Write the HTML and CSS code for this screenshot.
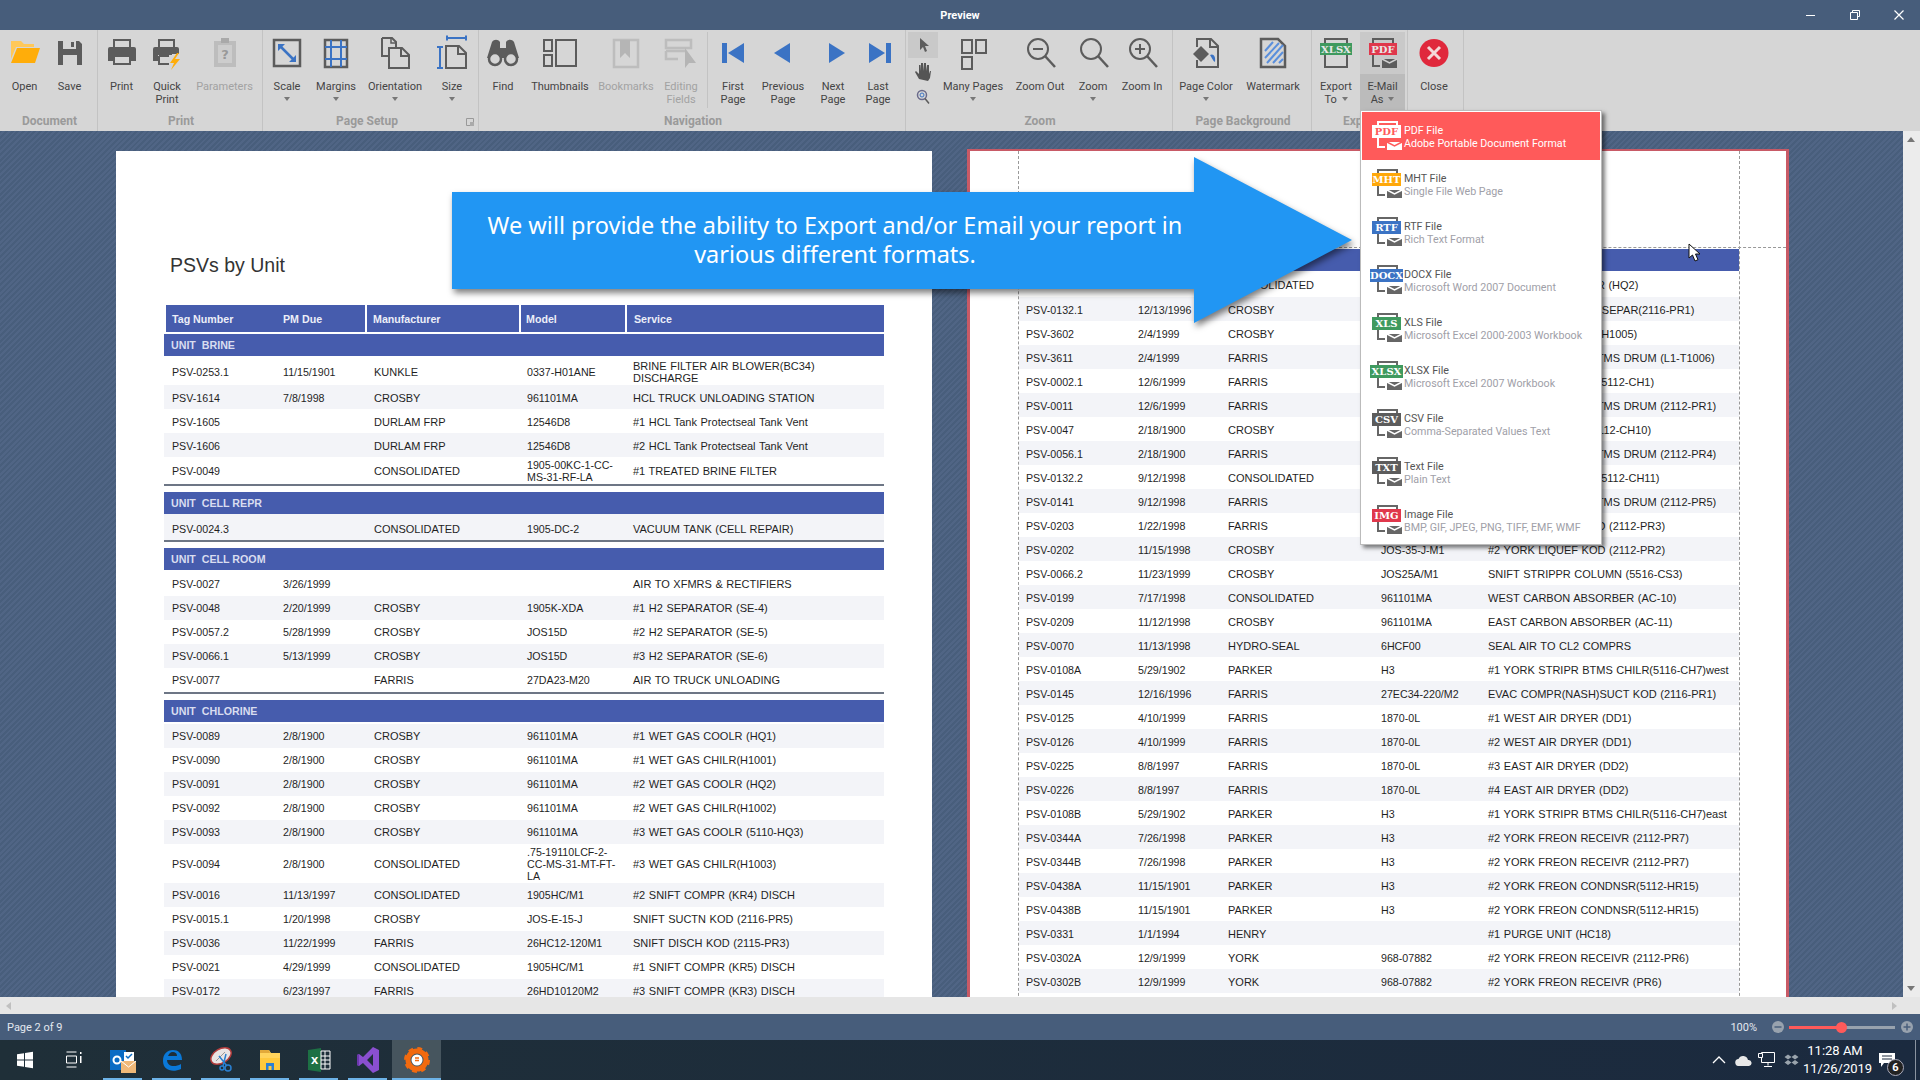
FILE: index.html
```html
<!DOCTYPE html>
<html>
<head>
  <meta charset="utf-8">
  <title>Preview</title>
  <link rel="stylesheet" href="styles.css">
</head>
<body>
<svg class="defs" width="0" height="0">
  <symbol id="maildoc" viewBox="0 0 32 30">
    <path d="M7 5V2h19v3M7 18v9h7" fill="none" stroke="#666" stroke-width="2"/>
    <path d="M16 22h15v8H16z" fill="#666"/>
    <path d="M16 22l7.500 4 7.500-4" fill="none" stroke="#fff" stroke-width="1.500"/>
  </symbol>
  <symbol id="maildocw" viewBox="0 0 32 30">
    <path d="M7 5V2h19v3M7 18v9h7" fill="none" stroke="#fff" stroke-width="2"/>
    <path d="M16 22h15v8H16z" fill="#fff"/>
    <path d="M16 22l7.500 4 7.500-4" fill="none" stroke="#ff5a5a" stroke-width="1.500"/>
  </symbol>
</svg>

<div id="app">
  <div class="titlebar">
    <span class="title">Preview</span>
    <div class="winbtns">
      <svg width="10" height="10" viewBox="0 0 10 10"><path d="M0 5.500h9" stroke="#fff"/></svg>
      <svg width="10" height="10" viewBox="0 0 10 10"><path d="M2.500 2.500V.5h7v6h-2M.5 2.500h7v7h-7z" fill="none" stroke="#fff"/></svg>
      <svg width="10" height="10" viewBox="0 0 10 10"><path d="M.5.500l9 9M9.500.500l-9 9" stroke="#fff" stroke-width="1.200"/></svg>
    </div>
  </div>

  <div class="ribbon">
    <div class="group g-doc">
      <div class="btns">
        <div class="btn w45"><svg class="ico" viewBox="0 0 36 36"><path d="M4 7h10l3 3h10v3H9L4 25z" fill="#ffc859"/><path d="M10 14h23l-5 15H4z" fill="#ffad0a"/></svg><span class="lbl">Open</span></div>
        <div class="btn w45"><svg class="ico" viewBox="0 0 36 36"><path d="M6 7h21l3 3v21H6z" fill="#5c5c5c"/><path d="M11 7h13v8H11zM11 21h14v10H11z" fill="#d6d6d6"/><path d="M19 8h3v5h-3z" fill="#5c5c5c"/></svg><span class="lbl">Save</span></div>
      </div>
      <div class="glabel">Document</div>
    </div>

    <div class="group g-print">
      <div class="btns">
        <div class="btn w43"><svg class="ico" viewBox="0 0 36 36"><path d="M10 14V6h16v8" fill="none" stroke="#5c5c5c" stroke-width="2"/><path d="M6 13h24a2 2 0 0 1 2 2v12h-5v-6H9v6H4V15a2 2 0 0 1 2-2z" fill="#5c5c5c"/><path d="M10 22h16v8H10z" fill="none" stroke="#5c5c5c" stroke-width="2"/></svg><span class="lbl">Print</span></div>
        <div class="btn w48"><svg class="ico" viewBox="0 0 36 36"><path d="M10 14V6h15v8" fill="none" stroke="#5c5c5c" stroke-width="2"/><path d="M6 13h22a2 2 0 0 1 2 2v5h-7v1H9v6H4V15a2 2 0 0 1 2-2z" fill="#5c5c5c"/><path d="M10 22h10M10 22v8h10" fill="none" stroke="#5c5c5c" stroke-width="2"/><path d="M28 19l-7 10h4l-3 7 9-11h-5l4-6z" fill="#ffad0a"/></svg><span class="lbl">Quick<br>Print</span></div>
        <div class="btn w67 off"><svg class="ico" viewBox="0 0 36 36"><path d="M7 7h22v26H7z" fill="#bdbdbd"/><path d="M14 4h8v5h-8z" fill="#a9a9a9"/><path d="M11 11h14v18H11z" fill="#cdcdcd"/><text x="18" y="25" class="qmark">?</text></svg><span class="lbl">Parameters</span></div>
      </div>
      <div class="glabel">Print</div>
    </div>

    <div class="group g-setup">
      <div class="btns">
        <div class="btn w44"><svg class="ico" viewBox="0 0 36 36"><path d="M5 6h26v26H5z" fill="none" stroke="#5c5c5c" stroke-width="2.500"/><path d="M10 11l16 16" stroke="#3b73c4" stroke-width="2.500"/><path d="M9 10h7l-7 7zM27 28h-7l7-7z" fill="#3b73c4"/></svg><span class="lbl">Scale</span></div>
        <div class="btn w54"><svg class="ico" viewBox="0 0 36 36"><path d="M7 6h22v27H7z" fill="none" stroke="#5c5c5c" stroke-width="2.500"/><path d="M13 6v27M23 6v27M7 13h22M7 25h22" stroke="#3b73c4" stroke-width="2"/></svg><span class="lbl">Margins</span></div>
        <div class="btn w64"><svg class="ico" viewBox="0 0 36 36"><path d="M5 4h10l4 4v8M12 22H5V4" fill="none" stroke="#5c5c5c" stroke-width="2"/><path d="M14 4v5h5" fill="none" stroke="#5c5c5c" stroke-width="1.500"/><path d="M12 14h13l7 7v13H12z" fill="#d6d6d6" stroke="#5c5c5c" stroke-width="2"/><path d="M24 14v8h8" fill="none" stroke="#5c5c5c" stroke-width="2"/></svg><span class="lbl">Orientation</span></div>
        <div class="btn w50"><svg class="ico" viewBox="0 0 36 36"><path d="M13 4h19M13 1.500v5M32 1.500v5M6 13v22M3 13h6M3 34h6" fill="none" stroke="#3b73c4" stroke-width="2"/><path d="M12 12h13l7 7v15H12z" fill="none" stroke="#5c5c5c" stroke-width="2"/><path d="M24 12v8h8" fill="none" stroke="#5c5c5c" stroke-width="2"/></svg><span class="lbl">Size</span></div>
      </div>
      <div class="glabel glabel-setup">Page Setup</div>
      <svg class="launcher" width="8" height="8" viewBox="0 0 8 8"><path d="M.5.500h7v7h-7z" fill="none" stroke="#999"/><path d="M4 4h4v4H4z" fill="#aaa"/></svg>
    </div>

    <div class="group g-nav">
      <div class="btns">
        <div class="btn w44"><svg class="ico" viewBox="0 0 36 36"><path d="M7 8c2-3 6-3 8 0v6h6V8c2-3 6-3 8 0l5 16H2z" fill="#5c5c5c"/><circle cx="10" cy="25" r="6" fill="#d6d6d6" stroke="#5c5c5c" stroke-width="2.500"/><circle cx="26" cy="25" r="6" fill="#d6d6d6" stroke="#5c5c5c" stroke-width="2.500"/></svg><span class="lbl">Find</span></div>
        <div class="btn w70"><svg class="ico" viewBox="0 0 36 36"><path d="M2 6h8v11H2zM2 21h8v11H2zM14 6h20v26H14z" fill="none" stroke="#5c5c5c" stroke-width="2"/></svg><span class="lbl">Thumbnails</span></div>
        <div class="btn w62 off"><svg class="ico" viewBox="0 0 36 36"><path d="M6 6h24v27H6z" fill="none" stroke="#bdbdbd" stroke-width="2.500"/><path d="M12 6h10v18l-5-5-5 5z" fill="#b5b5b5"/></svg><span class="lbl">Bookmarks</span></div>
        <div class="btn w48 off"><svg class="ico" viewBox="0 0 36 36"><path d="M3 6h25v8H3zM3 17h20M3 17v8h12" fill="none" stroke="#bdbdbd" stroke-width="2.500"/><path d="M22 14v20l4-5 7 0z" fill="#b5b5b5"/></svg><span class="lbl">Editing<br>Fields</span></div>
        <div class="vsep"></div>
        <div class="btn w48"><svg class="ico" viewBox="0 0 36 36"><path d="M7 9h5v20H7zM29 9v20L13 19z" fill="#3b73c4"/></svg><span class="lbl">First<br>Page</span></div>
        <div class="btn w52"><svg class="ico" viewBox="0 0 36 36"><path d="M25 9v20L9 19z" fill="#3b73c4"/></svg><span class="lbl">Previous<br>Page</span></div>
        <div class="btn w48"><svg class="ico" viewBox="0 0 36 36"><path d="M14 9v20l16-10z" fill="#3b73c4"/></svg><span class="lbl">Next<br>Page</span></div>
        <div class="btn w42"><svg class="ico" viewBox="0 0 36 36"><path d="M9 9v20l16-10zM26 9h5v20h-5z" fill="#3b73c4"/></svg><span class="lbl">Last<br>Page</span></div>
      </div>
      <div class="glabel">Navigation</div>
    </div>

    <div class="group g-zoom">
      <div class="btns">
        <div class="tools">
          <div class="tool tool-on"><svg width="14" height="16" viewBox="0 0 14 16"><path d="M4 1l0 12 3-3 2 5 2-1-2-5h4z" fill="#5c5c5c"/></svg></div>
          <div class="tool"><svg width="18" height="20" viewBox="0 0 18 20"><path d="M5 18L1 11l1-1 3 3V4h1.500l.5 6V2h2v8l1-8h2v8l1-6h2v9l1-3h1l-1 7-2 3z" fill="#555"/></svg></div>
          <div class="tool"><svg width="14" height="16" viewBox="0 0 14 16"><circle cx="6" cy="6" r="4.500" fill="none" stroke="#6a6a8a" stroke-width="1.500"/><circle cx="6" cy="6" r="2" fill="none" stroke="#3b73c4"/><path d="M9 9.500l4 5" stroke="#5c5c5c" stroke-width="1.500"/></svg></div>
        </div>
        <div class="btn w66"><svg class="ico" viewBox="0 0 36 36"><path d="M7 6h10v13H7zM21 6h10v13H21zM7 23h10v12H7z" fill="none" stroke="#5c5c5c" stroke-width="2"/></svg><span class="lbl">Many Pages</span></div>
        <div class="btn w68"><svg class="ico" viewBox="0 0 36 36"><circle cx="16" cy="15" r="10" fill="none" stroke="#5c5c5c" stroke-width="2"/><path d="M11 15h10" stroke="#5c5c5c" stroke-width="2"/><path d="M23 22l10 11" stroke="#5c5c5c" stroke-width="2.500"/></svg><span class="lbl">Zoom Out</span></div>
        <div class="btn w38"><svg class="ico" viewBox="0 0 36 36"><circle cx="16" cy="15" r="10" fill="none" stroke="#5c5c5c" stroke-width="2"/><path d="M23 22l10 11" stroke="#5c5c5c" stroke-width="2.500"/></svg><span class="lbl">Zoom</span></div>
        <div class="btn w60"><svg class="ico" viewBox="0 0 36 36"><circle cx="16" cy="15" r="10" fill="none" stroke="#5c5c5c" stroke-width="2"/><path d="M11 15h10M16 10v10" stroke="#5c5c5c" stroke-width="2"/><path d="M23 22l10 11" stroke="#5c5c5c" stroke-width="2.500"/></svg><span class="lbl">Zoom In</span></div>
      </div>
      <div class="glabel">Zoom</div>
    </div>

    <div class="group g-bg">
      <div class="btns">
        <div class="btn w62"><svg class="ico" viewBox="0 0 36 36"><path d="M9 13V5h14l7 7v21H9v-7" fill="none" stroke="#5c5c5c" stroke-width="2"/><path d="M22 5v8h8" fill="none" stroke="#5c5c5c" stroke-width="2"/><path d="M13 12l8 8-8 8-8-8z" fill="#5c5c5c"/><path d="M22 21c3-2 6 1 5 7-2-1-3-4-5-7z" fill="#3b73c4"/></svg><span class="lbl">Page Color</span></div>
        <div class="btn w72"><svg class="ico" viewBox="0 0 36 36"><path d="M6 5h17l7 7v21H6z" fill="none" stroke="#5c5c5c" stroke-width="2.500"/><path d="M10 17l8-9M10 24l14-15M12 29l16-18M18 29l10-11M24 29l4-4" stroke="#5a8fdc" stroke-width="2"/></svg><span class="lbl">Watermark</span></div>
      </div>
      <div class="glabel">Page Background</div>
    </div>

    <div class="group g-export">
      <div class="btns">
        <div class="btn w44"><svg class="ico" viewBox="0 0 36 36"><path d="M7 9V5h22v4M7 21v12h22V21" fill="none" stroke="#5c5c5c" stroke-width="2"/><path d="M2 9h32v12H2z" fill="#3f9a5f"/><text x="18" y="18.500" class="tag tag-lg">XLSX</text></svg><span class="lbl">Export<br>To <i class="caret-in"></i></span></div>
        <div class="btn-gap"></div>
        <div class="btn w45 btn-on"><svg class="ico" viewBox="0 0 36 36"><path d="M8 9V5h20v4M8 21v11h7" fill="none" stroke="#5c5c5c" stroke-width="2"/><path d="M4 9h28v12H4z" fill="#e0384c"/><text x="18" y="18.500" class="tag tag-lg">PDF</text><path d="M17 25h15v9H17z" fill="#5c5c5c"/><path d="M17 25l7.500 4 7.500-4" fill="none" stroke="#d0d0d0" stroke-width="1.500"/></svg><span class="lbl">E-Mail<br>As <i class="caret-in"></i></span></div>
      </div>
      <div class="glabel">Export</div>
    </div>

    <div class="group g-close">
      <div class="btns">
        <div class="btn w52"><svg class="ico" viewBox="0 0 36 36"><ellipse cx="18" cy="19" rx="14.500" ry="14" fill="#e0283c"/><path d="M12 13l12 12M24 13L12 25" stroke="#f4d8d8" stroke-width="3"/></svg><span class="lbl">Close</span></div>
      </div>
    </div>
  </div>

  <div class="mainrow">
    <div class="workspace">
      <div class="page page-left">
        <div class="report-title">PSVs by Unit</div>
        <div class="sheet">
          <div class="row head"><span>Tag Number</span><span>PM Due</span><span>Manufacturer</span><span>Model</span><span>Service</span></div>

          <div class="band">UNIT  BRINE</div>
          <div class="row h29 low"><span>PSV-0253.1</span><span>11/15/1901</span><span>KUNKLE</span><span>0337-H01ANE</span><span>BRINE FILTER AIR BLOWER(BC34)<br>DISCHARGE</span></div>
          <div class="row alt low"><span>PSV-1614</span><span>7/8/1998</span><span>CROSBY</span><span>961101MA</span><span>HCL TRUCK UNLOADING STATION</span></div>
          <div class="row low"><span>PSV-1605</span><span></span><span>DURLAM FRP</span><span>12546D8</span><span>#1 HCL Tank Protectseal Tank Vent</span></div>
          <div class="row alt low"><span>PSV-1606</span><span></span><span>DURLAM FRP</span><span>12546D8</span><span>#2 HCL Tank Protectseal Tank Vent</span></div>
          <div class="row h27"><span>PSV-0049</span><span></span><span>CONSOLIDATED</span><span>1905-00KC-1-CC-<br>MS-31-RF-LA</span><span>#1 TREATED BRINE FILTER</span></div>
          <div class="endline"></div>

          <div class="band">UNIT  CELL REPR</div>
          <div class="row h26 alt lower"><span>PSV-0024.3</span><span></span><span>CONSOLIDATED</span><span>1905-DC-2</span><span>VACUUM TANK (CELL REPAIR)</span></div>
          <div class="endline"></div>

          <div class="band">UNIT  CELL ROOM</div>
          <div class="row h26 low"><span>PSV-0027</span><span>3/26/1999</span><span></span><span></span><span>AIR TO XFMRS &amp; RECTIFIERS</span></div>
          <div class="row alt"><span>PSV-0048</span><span>2/20/1999</span><span>CROSBY</span><span>1905K-XDA</span><span>#1 H2 SEPARATOR (SE-4)</span></div>
          <div class="row"><span>PSV-0057.2</span><span>5/28/1999</span><span>CROSBY</span><span>JOS15D</span><span>#2 H2 SEPARATOR (SE-5)</span></div>
          <div class="row alt"><span>PSV-0066.1</span><span>5/13/1999</span><span>CROSBY</span><span>JOS15D</span><span>#3 H2 SEPARATOR (SE-6)</span></div>
          <div class="row"><span>PSV-0077</span><span></span><span>FARRIS</span><span>27DA23-M20</span><span>AIR TO TRUCK UNLOADING</span></div>
          <div class="endline"></div>

          <div class="band band-gap">UNIT  CHLORINE</div>
          <div class="row alt"><span>PSV-0089</span><span>2/8/1900</span><span>CROSBY</span><span>961101MA</span><span>#1 WET GAS COOLR (HQ1)</span></div>
          <div class="row"><span>PSV-0090</span><span>2/8/1900</span><span>CROSBY</span><span>961101MA</span><span>#1 WET GAS CHILR(H1001)</span></div>
          <div class="row alt"><span>PSV-0091</span><span>2/8/1900</span><span>CROSBY</span><span>961101MA</span><span>#2 WET GAS COOLR (HQ2)</span></div>
          <div class="row"><span>PSV-0092</span><span>2/8/1900</span><span>CROSBY</span><span>961101MA</span><span>#2 WET GAS CHILR(H1002)</span></div>
          <div class="row alt"><span>PSV-0093</span><span>2/8/1900</span><span>CROSBY</span><span>961101MA</span><span>#3 WET GAS COOLR (5110-HQ3)</span></div>
          <div class="row h39"><span>PSV-0094</span><span>2/8/1900</span><span>CONSOLIDATED</span><span>.75-19110LCF-2-<br>CC-MS-31-MT-FT-<br>LA</span><span>#3 WET GAS CHILR(H1003)</span></div>
          <div class="row alt"><span>PSV-0016</span><span>11/13/1997</span><span>CONSOLIDATED</span><span>1905HC/M1</span><span>#2 SNIFT COMPR (KR4) DISCH</span></div>
          <div class="row"><span>PSV-0015.1</span><span>1/20/1998</span><span>CROSBY</span><span>JOS-E-15-J</span><span>SNIFT SUCTN KOD (2116-PR5)</span></div>
          <div class="row alt"><span>PSV-0036</span><span>11/22/1999</span><span>FARRIS</span><span>26HC12-120M1</span><span>SNIFT DISCH KOD (2115-PR3)</span></div>
          <div class="row"><span>PSV-0021</span><span>4/29/1999</span><span>CONSOLIDATED</span><span>1905HC/M1</span><span>#1 SNIFT COMPR (KR5) DISCH</span></div>
          <div class="row alt"><span>PSV-0172</span><span>6/23/1997</span><span>FARRIS</span><span>26HD10120M2</span><span>#3 SNIFT COMPR (KR3) DISCH</span></div>
        </div>
      </div>

      <div class="page page-right">
        <div class="margins">
          <div class="band"></div>
          <div class="row h26"><span>PSV-0217</span><span>1/27/1999</span><span>CONSOLIDATED</span><span></span><span>#2 WET GAS COOLER (HQ2)</span></div>
          <div class="row alt"><span>PSV-0132.1</span><span>12/13/1996</span><span>CROSBY</span><span></span><span>#2 EVAC COMPR OIL SEPAR(2116-PR1)</span></div>
          <div class="row"><span>PSV-3602</span><span>2/4/1999</span><span>CROSBY</span><span></span><span>#3 WET GAS CHILLR(H1005)</span></div>
          <div class="row alt"><span>PSV-3611</span><span>2/4/1999</span><span>FARRIS</span><span></span><span>#1 YORK CONDSR BTMS DRUM (L1-T1006)</span></div>
          <div class="row"><span>PSV-0002.1</span><span>12/6/1999</span><span>FARRIS</span><span></span><span>#1 YORK CONDNSR (5112-CH1)</span></div>
          <div class="row alt"><span>PSV-0011</span><span>12/6/1999</span><span>FARRIS</span><span></span><span>#1 YORK CONDSR BTMS DRUM (2112-PR1)</span></div>
          <div class="row"><span>PSV-0047</span><span>2/18/1900</span><span>CROSBY</span><span></span><span>#2 YORK CHILLER (5112-CH10)</span></div>
          <div class="row alt"><span>PSV-0056.1</span><span>2/18/1900</span><span>FARRIS</span><span></span><span>#4 YORK CONDSR BTMS DRUM (2112-PR4)</span></div>
          <div class="row"><span>PSV-0132.2</span><span>9/12/1998</span><span>CONSOLIDATED</span><span></span><span>#3 YORK CONDNSR (5112-CH11)</span></div>
          <div class="row alt"><span>PSV-0141</span><span>9/12/1998</span><span>FARRIS</span><span></span><span>#5 YORK CONDSR BTMS DRUM (2112-PR5)</span></div>
          <div class="row"><span>PSV-0203</span><span>1/22/1998</span><span>FARRIS</span><span></span><span>#1 YORK LIQUEF KOD (2112-PR3)</span></div>
          <div class="row alt"><span>PSV-0202</span><span>11/15/1998</span><span>CROSBY</span><span>JOS-35-J-M1</span><span>#2 YORK LIQUEF KOD (2112-PR2)</span></div>
          <div class="row"><span>PSV-0066.2</span><span>11/23/1999</span><span>CROSBY</span><span>JOS25A/M1</span><span>SNIFT STRIPPR COLUMN (5516-CS3)</span></div>
          <div class="row alt"><span>PSV-0199</span><span>7/17/1998</span><span>CONSOLIDATED</span><span>961101MA</span><span>WEST CARBON ABSORBER (AC-10)</span></div>
          <div class="row"><span>PSV-0209</span><span>11/12/1998</span><span>CROSBY</span><span>961101MA</span><span>EAST CARBON ABSORBER (AC-11)</span></div>
          <div class="row alt"><span>PSV-0070</span><span>11/13/1998</span><span>HYDRO-SEAL</span><span>6HCF00</span><span>SEAL AIR TO CL2 COMPRS</span></div>
          <div class="row"><span>PSV-0108A</span><span>5/29/1902</span><span>PARKER</span><span>H3</span><span>#1 YORK STRIPR BTMS CHILR(5116-CH7)west</span></div>
          <div class="row alt"><span>PSV-0145</span><span>12/16/1996</span><span>FARRIS</span><span>27EC34-220/M2</span><span>EVAC COMPR(NASH)SUCT KOD (2116-PR1)</span></div>
          <div class="row"><span>PSV-0125</span><span>4/10/1999</span><span>FARRIS</span><span>1870-0L</span><span>#1 WEST AIR DRYER (DD1)</span></div>
          <div class="row alt"><span>PSV-0126</span><span>4/10/1999</span><span>FARRIS</span><span>1870-0L</span><span>#2 WEST AIR DRYER (DD1)</span></div>
          <div class="row"><span>PSV-0225</span><span>8/8/1997</span><span>FARRIS</span><span>1870-0L</span><span>#3 EAST AIR DRYER (DD2)</span></div>
          <div class="row alt"><span>PSV-0226</span><span>8/8/1997</span><span>FARRIS</span><span>1870-0L</span><span>#4 EAST AIR DRYER (DD2)</span></div>
          <div class="row"><span>PSV-0108B</span><span>5/29/1902</span><span>PARKER</span><span>H3</span><span>#1 YORK STRIPR BTMS CHILR(5116-CH7)east</span></div>
          <div class="row alt"><span>PSV-0344A</span><span>7/26/1998</span><span>PARKER</span><span>H3</span><span>#2 YORK FREON RECEIVR (2112-PR7)</span></div>
          <div class="row"><span>PSV-0344B</span><span>7/26/1998</span><span>PARKER</span><span>H3</span><span>#2 YORK FREON RECEIVR (2112-PR7)</span></div>
          <div class="row alt"><span>PSV-0438A</span><span>11/15/1901</span><span>PARKER</span><span>H3</span><span>#2 YORK FREON CONDNSR(5112-HR15)</span></div>
          <div class="row"><span>PSV-0438B</span><span>11/15/1901</span><span>PARKER</span><span>H3</span><span>#2 YORK FREON CONDNSR(5112-HR15)</span></div>
          <div class="row alt"><span>PSV-0331</span><span>1/1/1994</span><span>HENRY</span><span></span><span>#1 PURGE UNIT (HC18)</span></div>
          <div class="row"><span>PSV-0302A</span><span>12/9/1999</span><span>YORK</span><span>968-07882</span><span>#2 YORK FREON RECEIVR (2112-PR6)</span></div>
          <div class="row alt"><span>PSV-0302B</span><span>12/9/1999</span><span>YORK</span><span>968-07882</span><span>#2 YORK FREON RECEIVR (PR6)</span></div>
        </div>
      </div>
    </div>
    <div class="vscroll"><i class="arr arr-up"></i><i class="arr arr-down"></i></div>
  </div>
  <div class="hscroll"><i class="arr arr-left"></i><i class="arr arr-right"></i></div>

  <div class="statusbar">
    <span>Page 2 of 9</span>
    <div class="zoombar">
      <span class="pct">100%</span>
      <svg width="12" height="12" viewBox="0 0 12 12"><circle cx="6" cy="6" r="6" fill="#98a2ae"/><path d="M2.500 6h7" stroke="#4a5f7d" stroke-width="1.500"/></svg>
      <div class="track"><div class="fill"></div><div class="thumb"></div></div>
      <svg width="12" height="12" viewBox="0 0 12 12"><circle cx="6" cy="6" r="6" fill="#98a2ae"/><path d="M2.500 6h7M6 2.500v7" stroke="#4a5f7d" stroke-width="1.500"/></svg>
    </div>
  </div>

  <div class="taskbar">
    <div class="tb-slot"><svg width="18" height="18" viewBox="0 0 18 18"><path d="M1 3.200l7-1v6.300H1zM9 2l8-1.200v7.700H9zM1 9.500h7v6.300l-7-1zM9 9.500h8v7.700L9 16z" fill="#fff"/></svg></div>
    <div class="tb-slot"><svg width="18" height="18" viewBox="0 0 18 18"><path d="M1.500 1h10M1.500 16h10M1.500 5h10v7h-10z" fill="none" stroke="#fff"/><path d="M15 1h1.500v2H15zM15 5h1.500v7H15z" fill="#fff"/></svg></div>
    <div class="tb-slot tb-run"><svg width="28" height="28" viewBox="0 0 28 28"><path d="M1 4h16v20H1z" fill="#0a6cc4"/><circle cx="8" cy="14" r="3.500" fill="none" stroke="#fff" stroke-width="2"/><path d="M15 6h10v9H15z" fill="#fff"/><path d="M17 10l2 2 4-4" fill="none" stroke="#0a6cc4" stroke-width="1.500"/><path d="M12 15h15v12H12z" fill="#f0b878"/><path d="M12 15l7.500 6 7.500-6" fill="none" stroke="#fff"/></svg></div>
    <div class="tb-slot tb-run"><svg width="24" height="26" viewBox="0 0 24 26"><path d="M3 14c0-7 4-11 10-11 5 0 9 3 9 10H7c0 6 7 8 14 4v5c-9 4-18 1-18-8zM8 9h9c0-3-2-4-4-4-3 0-4 2-5 4z" fill="#0a78d7"/></svg></div>
    <div class="tb-slot tb-run"><svg width="26" height="26" viewBox="0 0 26 26"><ellipse cx="13" cy="9" rx="11" ry="7" transform="rotate(-30 13 9)" fill="#e9e4e4" stroke="#b33c3c" stroke-width="1.500"/><path d="M8 14L17 5" stroke="#999"/><path d="M11 9l8 10M18 7l-3 12" stroke="#2a7fd0" stroke-width="1.500"/><circle cx="20" cy="21" r="3" fill="none" stroke="#2a7fd0" stroke-width="1.500"/><circle cx="14" cy="21" r="2" fill="none" stroke="#2a7fd0" stroke-width="1.500"/></svg></div>
    <div class="tb-slot tb-run"><svg width="24" height="24" viewBox="0 0 24 24"><path d="M2 2h9l2 3h9v17H2z" fill="#ffd35c"/><path d="M2 2h9l1 3H2z" fill="#e2a93a"/><path d="M2 10h20v12H2z" fill="#ffc83d"/><path d="M8 22v-7h8v7h-2.500v-4h-3v4z" fill="#2d7fd3"/></svg></div>
    <div class="tb-slot tb-run"><svg width="24" height="26" viewBox="0 0 24 26"><path d="M1 3l13-2v24L1 23z" fill="#1d7044"/><path d="M14 4h9v18h-9z" fill="none" stroke="#fff"/><path d="M14 9h9M14 13h9M14 17h9M18 4v18" stroke="#fff"/><text x="7.500" y="17" class="xl-x">x</text></svg></div>
    <div class="tb-slot tb-run"><svg width="24" height="28" viewBox="0 0 24 28"><path d="M17 1l6 3v20l-6 3L7 17l-4 3-2-1V9l2-1 4 3zM17 8l-6 6 6 6z" fill="#8a4fd0"/><path d="M1 9l2-1v12l-2-1z" fill="#6c37ad"/></svg></div>
    <div class="tb-slot tb-active"><svg width="28" height="28" viewBox="0 0 28 28"><circle cx="14" cy="14" r="9" fill="none" stroke="#f26a0f" stroke-width="5"/><circle cx="14" cy="14" r="11" fill="none" stroke="#f26a0f" stroke-width="4" stroke-dasharray="4.500 4.140"/><circle cx="14" cy="14" r="5.500" fill="#fff"/><path d="M12 12h4M12 14.500h4" stroke="#f26a0f" stroke-width="1.300"/></svg></div>
    <div class="tray">
      <span class="tray-ico"><svg width="14" height="8" viewBox="0 0 14 8"><path d="M1 7l6-6 6 6" fill="none" stroke="#fff" stroke-width="1.300"/></svg></span>
      <span class="tray-ico"><svg width="17" height="11" viewBox="0 0 17 11"><path d="M4 11a3.500 3.500 0 0 1-.5-7 5 5 0 0 1 9.500 1 3 3 0 0 1 1 6z" fill="#e8e8e8"/></svg></span>
      <span class="tray-ico"><svg width="18" height="16" viewBox="0 0 18 16"><path d="M3.500 .5h13v10h-13zM10 10.500v3M6 14.500h8" fill="none" stroke="#fff"/><path d="M.5 1.500h4v4h-4z" fill="#1c2a3e" stroke="#fff"/></svg></span>
      <span class="tray-ico"><svg width="15" height="13" viewBox="0 0 15 13"><path d="M4 .5L7.500 3 4 5.500.5 3zM11 .5L14.500 3 11 5.500 7.500 3zM4 6l3.500 2.500L4 11 .5 8.500zM11 6l3.500 2.500L11 11 7.500 8.500z" fill="#9aa4ad"/></svg></span>
      <div class="clock">11:28 AM<br>11/26/2019</div>
      <div class="notif">
        <svg width="16" height="14" viewBox="0 0 16 14"><path d="M0 0h16v10H5l-3 4v-4H0z" fill="#fff"/><path d="M3 3h10M3 6h10" stroke="#1c2a3e"/></svg>
        <span class="badge">6</span>
      </div>
    </div>
  </div>

  <!-- overlays -->
  <div class="callout">
    <svg class="arrow" width="910" height="176" viewBox="0 0 910 176"><path d="M0 35h742V0l158 83-158 83v-34H0z" fill="#2196f3"/></svg>
    <p>We will provide the ability to Export and/or Email your report in<br>various different formats.</p>
  </div>

  <div class="menu">
    <div class="item item-on"><svg class="mi" viewBox="0 0 32 30"><use href="#maildocw"/><rect x="1" y="5" width="29" height="13" fill="#fff"/><text x="15.500" y="15" class="tag tag-red">PDF</text></svg><div><div class="mt">PDF File</div><div class="md">Adobe Portable Document Format</div></div></div>
    <div class="item"><svg class="mi" viewBox="0 0 32 30"><use href="#maildoc"/><rect x="1" y="5" width="29" height="13" fill="#ffa80a"/><text x="15.500" y="15" class="tag">MHT</text></svg><div><div class="mt">MHT File</div><div class="md">Single File Web Page</div></div></div>
    <div class="item"><svg class="mi" viewBox="0 0 32 30"><use href="#maildoc"/><rect x="1" y="5" width="29" height="13" fill="#3b73c4"/><text x="15.500" y="15" class="tag">RTF</text></svg><div><div class="mt">RTF File</div><div class="md">Rich Text Format</div></div></div>
    <div class="item"><svg class="mi" viewBox="0 0 32 30"><use href="#maildoc"/><rect x="-1" y="5" width="33" height="13" fill="#3b73c4"/><text x="15.500" y="15" class="tag">DOCX</text></svg><div><div class="mt">DOCX File</div><div class="md">Microsoft Word 2007 Document</div></div></div>
    <div class="item"><svg class="mi" viewBox="0 0 32 30"><use href="#maildoc"/><rect x="1" y="5" width="29" height="13" fill="#3f9a5f"/><text x="15.500" y="15" class="tag">XLS</text></svg><div><div class="mt">XLS File</div><div class="md">Microsoft Excel 2000-2003 Workbook</div></div></div>
    <div class="item"><svg class="mi" viewBox="0 0 32 30"><use href="#maildoc"/><rect x="-1" y="5" width="33" height="13" fill="#3f9a5f"/><text x="15.500" y="15" class="tag">XLSX</text></svg><div><div class="mt">XLSX File</div><div class="md">Microsoft Excel 2007 Workbook</div></div></div>
    <div class="item"><svg class="mi" viewBox="0 0 32 30"><use href="#maildoc"/><rect x="1" y="5" width="29" height="13" fill="#5c5c5c"/><text x="15.500" y="15" class="tag">CSV</text></svg><div><div class="mt">CSV File</div><div class="md">Comma-Separated Values Text</div></div></div>
    <div class="item"><svg class="mi" viewBox="0 0 32 30"><use href="#maildoc"/><rect x="1" y="5" width="29" height="13" fill="#5c5c5c"/><text x="15.500" y="15" class="tag">TXT</text></svg><div><div class="mt">Text File</div><div class="md">Plain Text</div></div></div>
    <div class="item"><svg class="mi" viewBox="0 0 32 30"><use href="#maildoc"/><rect x="1" y="5" width="29" height="13" fill="#e0384c"/><text x="15.500" y="15" class="tag">IMG</text></svg><div><div class="mt">Image File</div><div class="md">BMP, GIF, JPEG, PNG, TIFF, EMF, WMF</div></div></div>
  </div>

  <svg class="cursor" width="14" height="20" viewBox="0 0 14 20"><path d="M1 1v14l3.500-3 2.500 6 3-1.300-2.500-5.700H12z" fill="#fff" stroke="#111"/></svg>
</div>
</body>
</html>
```

FILE: styles.css
```css
* {
  box-sizing: border-box;
}

html, body {
  margin: 0;
  padding: 0;
  overflow: hidden;
}

.defs {
  position: absolute;
}

#app {
  position: relative;
  width: 1920px;
  height: 1080px;
  display: flex;
  flex-direction: column;
  overflow: hidden;
  font-family: "Roboto", "Liberation Sans", sans-serif;
  font-size: 11px;
  color: #444;
  background: #d6d6d6;
}

/* title bar */
.titlebar {
  position: relative;
  height: 30px;
  flex: none;
  display: flex;
  align-items: center;
  justify-content: center;
  background: #475d7b;
  color: #fff;
}

.title {
  font-weight: bold;
  font-size: 11px;
}

.winbtns {
  position: absolute;
  right: 16px;
  top: 10px;
  display: flex;
  gap: 34px;
}

/* ribbon */
.ribbon {
  height: 101px;
  flex: none;
  display: flex;
  background: #d6d6d6;
}

.group {
  position: relative;
  display: flex;
  flex-direction: column;
  padding-left: 2px;
  border-right: 1px solid #c3c3c3;
}

.g-doc { width: 98px; }
.g-print { width: 165px; }
.g-setup { width: 216px; }
.g-nav { width: 427px; }
.g-zoom { width: 267px; }
.g-bg { width: 139px; }
.g-export { width: 96px; }
.g-close { width: 56px; padding-left: 0; }

.btns {
  display: flex;
  height: 80px;
  padding-top: 2px;
}

.btn {
  display: flex;
  flex-direction: column;
  align-items: center;
  text-align: center;
  flex: none;
}

.w38 { width: 38px; }
.w42 { width: 42px; }
.w43 { width: 43px; }
.w44 { width: 44px; }
.w45 { width: 45px; }
.w48 { width: 48px; }
.w50 { width: 50px; }
.w52 { width: 52px; }
.w54 { width: 54px; }
.w60 { width: 60px; }
.w62 { width: 62px; }
.w64 { width: 64px; }
.w66 { width: 66px; }
.w67 { width: 67px; }
.w68 { width: 68px; }
.w70 { width: 70px; }
.w72 { width: 72px; }

.btn-gap {
  width: 2px;
}

.ico {
  width: 36px;
  height: 36px;
  flex: none;
  margin-top: 2px;
  margin-bottom: 10px;
}

.lbl {
  line-height: 13px;
  white-space: nowrap;
}

.off {
  color: #a2a2a2;
}

.btn-on {
  height: 78px;
  background: linear-gradient(#c9c9c9 0, #c9c9c9 42px, #bbb 42px);
}

.caret-in {
  display: inline-block;
  width: 0;
  height: 0;
  margin-left: 2px;
  vertical-align: 2px;
  border-left: 3.500px solid transparent;
  border-right: 3.500px solid transparent;
  border-top: 4px solid #777;
}

/* dropdown arrows under the one-line captions */
.g-setup .btn .lbl::after,
.g-zoom .w66 .lbl::after,
.g-zoom .w38 .lbl::after,
.g-bg .w62 .lbl::after {
  content: "";
  display: block;
  width: 0;
  height: 0;
  margin: 4px auto 0;
  border-left: 3.500px solid transparent;
  border-right: 3.500px solid transparent;
  border-top: 4px solid #777;
}

.vsep {
  width: 1px;
  height: 76px;
  margin: 0 1px 0 2px;
  background: #c3c3c3;
  flex: none;
}

.tools {
  width: 30px;
  margin-right: 2px;
  flex: none;
}

.tool {
  height: 26px;
  display: flex;
  align-items: center;
  justify-content: center;
}

.tool-on {
  background: #c9c9c9;
}

.glabel {
  height: 21px;
  padding-top: 2px;
  line-height: 19px;
  text-align: center;
  font-weight: bold;
  font-size: 12px;
  color: #9a9a9a;
}

.glabel-setup {
  padding-right: 9px;
}

.launcher {
  position: absolute;
  right: 4px;
  bottom: 5px;
}

.qmark {
  font-family: "DejaVu Sans", sans-serif;
  font-size: 13px;
  font-weight: bold;
  fill: #999;
  text-anchor: middle;
}

.tag {
  font-family: "DejaVu Serif", serif;
  font-weight: bold;
  font-size: 10px;
  fill: #fff;
  text-anchor: middle;
}

.tag-lg {
  fill: #e8e8e8;
}

.tag-red {
  fill: #ff5a5a;
}

/* page area */
.mainrow {
  height: 866px;
  flex: none;
  display: flex;
}

.workspace {
  flex: 1;
  display: flex;
  align-items: flex-start;
  gap: 35px;
  padding: 18px 0 0 116px;
  overflow: hidden;
  background: repeating-linear-gradient(135deg, #485e7c 0, #485e7c 2px, #506585 2px, #506585 4px);
}

.vscroll {
  position: relative;
  width: 17px;
  background: #ececec;
}

.hscroll {
  position: relative;
  height: 17px;
  flex: none;
  background: #e6e6e6;
}

.arr {
  position: absolute;
  width: 0;
  height: 0;
}

.arr-up {
  top: 6px;
  left: 4px;
  border-left: 4px solid transparent;
  border-right: 4px solid transparent;
  border-bottom: 5px solid #777;
}

.arr-down {
  bottom: 6px;
  left: 4px;
  border-left: 4px solid transparent;
  border-right: 4px solid transparent;
  border-top: 5px solid #777;
}

.arr-left {
  left: 6px;
  top: 5px;
  border-top: 4px solid transparent;
  border-bottom: 4px solid transparent;
  border-right: 5px solid #c0c0c0;
}

.arr-right {
  right: 23px;
  top: 5px;
  border-top: 4px solid transparent;
  border-bottom: 4px solid transparent;
  border-left: 5px solid #c0c0c0;
}

.page {
  background: #fff;
  flex: none;
  color: #1f1f1f;
  font-family: "Liberation Sans", Arial, sans-serif;
  font-size: 10.670px;
  line-height: 12px;
}

.page-left {
  width: 816px;
  height: 900px;
  margin-top: 2px;
  padding-left: 48px;
}

.report-title {
  height: 154px;
  padding: 104px 0 0 6px;
  font-size: 19.500px;
  line-height: 20px;
  color: #333;
}

.sheet {
  width: 720px;
}

.row {
  display: grid;
  height: 24px;
  align-items: center;
  grid-template-columns: 111px 90px 154px 106px 259px;
}

.row > span:nth-child(3) {
  font-size: 11px;
}

.row > span:nth-child(5) {
  font-size: 11px;
  word-spacing: .5px;
}

.page-left .row > span:nth-child(1),
.page-left .row > span:nth-child(2),
.page-left .row > span:nth-child(4),
.page-left .row > span:nth-child(5) {
  padding-left: 8px;
}

.page-left .row > span:nth-child(3) {
  padding-left: 9px;
}

.alt {
  background: #f3f4f8;
}

.h26 { height: 26px; }
.h27 { height: 27px; }
.h29 { height: 29px; }
.h39 { height: 39px; }

.low { padding-top: 2px; }
.lower { padding-top: 4px; }

.head {
  height: 29px;
  padding-bottom: 2px;
  align-items: stretch;
  font-weight: bold;
  color: #eceef8;
}

.head span {
  display: flex;
  align-items: center;
  background: #465cad;
}

.page-left .head span:nth-child(1) {
  margin-left: 2px;
  padding-left: 6px;
}

.head span:nth-child(3),
.head span:nth-child(4),
.head span:nth-child(5) {
  border-left: 2px solid #fff;
}

.page-left .head span:nth-child(3) { padding-left: 6px; font-size: 10.670px; }
.page-left .head span:nth-child(4) { padding-left: 5px; }
.page-left .head span:nth-child(5) { padding-left: 7px; font-size: 10.670px; word-spacing: 0; }

.band {
  height: 22px;
  padding-left: 7px;
  line-height: 22px;
  white-space: pre;
  font-weight: bold;
  color: #d9ddf0;
  background: #465cad;
}

.band-gap {
  margin-bottom: 2px;
}

.endline {
  height: 8px;
  border-top: 2px solid #6d7685;
}

.page-right {
  position: relative;
  width: 822px;
  height: 900px;
  border-style: solid;
  border-color: #c85a66;
  border-width: 2px 3px 0;
}

/* margin guides of the selected page */
.page-right::before {
  content: "";
  position: absolute;
  left: 0;
  right: 0;
  top: 96px;
  border-top: 1px dashed #999;
}

.margins {
  width: 722px;
  height: 900px;
  margin-left: 48px;
  padding-top: 98px;
  border-left: 1px dashed #999;
  border-right: 1px dashed #999;
}

.margins .row {
  padding-top: 2px;
  grid-template-columns: 119px 90px 153px 107px 251px;
}

.margins .row > span:nth-child(1) {
  padding-left: 7px;
}

.margins .row > span:nth-child(5) {
  white-space: nowrap;
}

/* status bar */
.statusbar {
  height: 26px;
  flex: none;
  display: flex;
  align-items: center;
  justify-content: space-between;
  padding: 0 7px;
  background: #475d7b;
  color: #e3e8ef;
}

.zoombar {
  display: flex;
  align-items: center;
}

.pct {
  margin-right: 15px;
}

.track {
  position: relative;
  width: 106px;
  height: 3px;
  margin: 0 6px 0 5px;
  background: #98a2ae;
}

.fill {
  width: 50%;
  height: 3px;
  background: #ff5a5a;
}

.thumb {
  position: absolute;
  left: 47px;
  top: -4px;
  width: 11px;
  height: 11px;
  border-radius: 50%;
  background: #ff5a5a;
}

/* taskbar */
.taskbar {
  height: 40px;
  flex: none;
  display: flex;
  background: linear-gradient(90deg, #1f2f38, #1b2a3f);
  color: #fff;
}

.tb-slot {
  position: relative;
  width: 49px;
  display: flex;
  align-items: center;
  justify-content: center;
}

.tb-run::after {
  content: "";
  position: absolute;
  left: 5px;
  right: 5px;
  bottom: 0;
  height: 2px;
  background: #6db3e8;
}

.tb-active {
  background: #46555e;
}

.tb-active::after {
  content: "";
  position: absolute;
  left: 0;
  right: 0;
  bottom: 0;
  height: 2px;
  background: #6db3e8;
}

.tray {
  margin: 0 4px 0 auto;
  display: flex;
  align-items: center;
  padding-right: 8px;
  border-right: 1px solid #8a93a0;
}

.tray-ico {
  width: 24px;
  display: flex;
  justify-content: center;
}

.clock {
  width: 64px;
  text-align: center;
  font-size: 13px;
  line-height: 18px;
  white-space: nowrap;
}

.notif {
  position: relative;
  width: 40px;
  height: 40px;
  display: flex;
  align-items: center;
  justify-content: center;
}

.badge {
  position: absolute;
  left: 20px;
  top: 19px;
  width: 17px;
  height: 17px;
  border: 1px solid #aab;
  border-radius: 50%;
  background: #222;
  text-align: center;
  font-size: 11px;
  line-height: 15px;
  font-weight: bold;
}

.xl-x {
  font-family: "Liberation Sans", sans-serif;
  font-size: 13px;
  font-weight: bold;
  fill: #fff;
  text-anchor: middle;
}

/* callout arrow */
.callout {
  position: absolute;
  left: 452px;
  top: 157px;
  width: 910px;
  height: 176px;
}

.arrow {
  position: absolute;
  left: 0;
  top: 0;
  filter: drop-shadow(2px 4px 3px rgba(0, 0, 0, .5));
}

.callout p {
  position: relative;
  width: 766px;
  margin: 0;
  padding-top: 54px;
  text-align: center;
  font-family: "Noto Sans", sans-serif;
  font-size: 23.500px;
  line-height: 29px;
  color: #fff;
}

/* e-mail dropdown */
.menu {
  position: absolute;
  left: 1360px;
  top: 110px;
  width: 242px;
  height: 435px;
  padding: 1px;
  border: 1px solid #bbb;
  background: #fff;
  box-shadow: 3px 3px 4px rgba(0, 0, 0, .5);
}

.item {
  height: 48px;
  display: flex;
  padding-left: 9px;
  gap: 1px;
}

.item-on {
  background: #ff5a5a;
}

.mi {
  width: 32px;
  height: 30px;
  flex: none;
  margin-top: 8px;
  overflow: visible;
}

.mt {
  padding-top: 12px;
  line-height: 13px;
  font-size: 10.700px;
  color: #555;
}

.md {
  line-height: 13px;
  font-size: 10.700px;
  color: #a0a0a8;
}

.item-on .mt, .item-on .md {
  color: #fff;
}

.cursor {
  position: absolute;
  left: 1688px;
  top: 243px;
}
```
